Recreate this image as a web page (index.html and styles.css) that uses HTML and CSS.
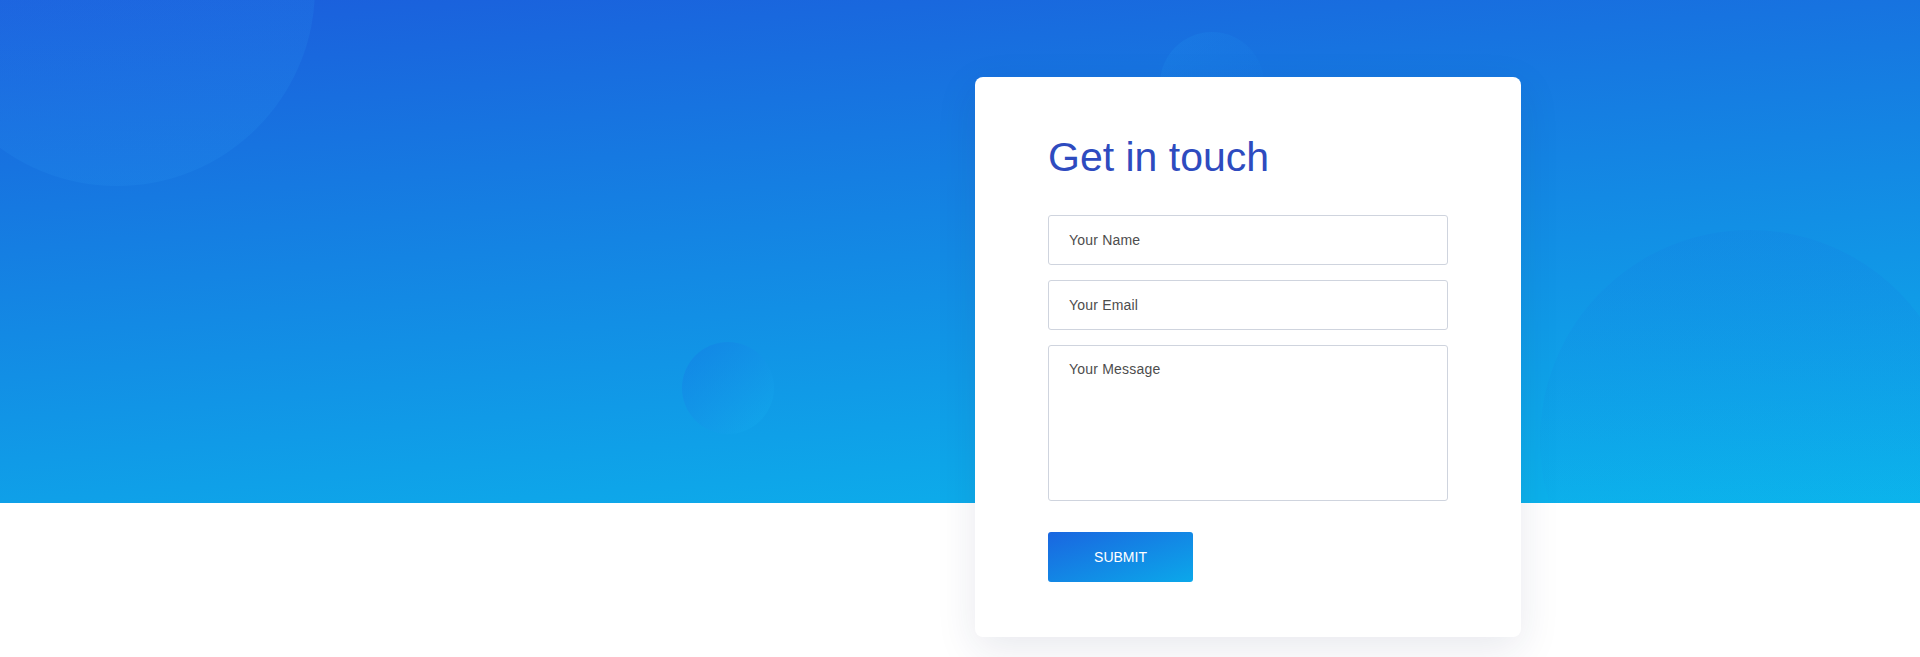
FILE: index.html
```html
<!DOCTYPE html>
<html lang="en">
<head>
<meta charset="utf-8">
<title>Get in touch</title>
<link rel="stylesheet" href="styles.css">
</head>
<body>
<section class="contact">
  <div class="band" aria-hidden="true">
    <span class="bubble bubble-big"></span>
    <span class="bubble bubble-small"></span>
    <span class="bubble bubble-top"></span>
    <span class="bubble bubble-right"></span>
  </div>
  <div class="layout">
    <div class="spacer"></div>
    <form class="card">
      <h2 class="title">Get in touch</h2>
      <div class="fields">
        <input class="field" type="text" placeholder="Your Name">
        <input class="field" type="email" placeholder="Your Email">
        <textarea class="field field-area" placeholder="Your Message"></textarea>
      </div>
      <button class="submit" type="button">SUBMIT</button>
    </form>
  </div>
</section>
</body>
</html>
```

FILE: styles.css
```css
* { box-sizing: border-box; }

html, body {
  margin: 0;
  padding: 0;
  background: #fff;
  font-family: "Liberation Sans", Arial, sans-serif;
}

.contact {
  position: relative;
  height: 657px;
  overflow: hidden;
}

.band {
  position: absolute;
  left: 0;
  top: 0;
  width: 100%;
  height: 503px;
  overflow: hidden;
  background: linear-gradient(175deg, #1b5ddc 0%, #0bb6ec 100%);
}

.bubble {
  position: absolute;
  border-radius: 50%;
}

.bubble-big {
  left: -81px;
  top: -210px;
  width: 396px;
  height: 396px;
  background: linear-gradient(160deg, rgba(40,130,240,0.16), rgba(40,150,240,0.2));
}

.bubble-small {
  left: 682px;
  top: 342px;
  width: 92px;
  height: 92px;
  background: linear-gradient(135deg, rgba(20,120,228,0.5), rgba(20,185,240,0.3));
}

.bubble-top {
  left: 1160px;
  top: 32px;
  width: 104px;
  height: 104px;
  background: linear-gradient(135deg, rgba(30,140,235,0.3), rgba(20,110,225,0.12));
}

.bubble-right {
  left: 1540px;
  top: 230px;
  width: 420px;
  height: 420px;
  background: linear-gradient(180deg, rgba(20,120,225,0.18), rgba(20,150,230,0.04) 70%);
}

.layout {
  position: relative;
  display: grid;
  grid-template-columns: 975px 546px 1fr;
  padding-top: 77px;
}

.card {
  grid-column: 2;
  background: #fff;
  border-radius: 8px;
  padding: 57px 73px 55px 73px;
  box-shadow: 0 12px 40px rgba(30, 40, 90, 0.10);
  display: flex;
  flex-direction: column;
  align-items: flex-start;
}

.title {
  margin: 0 0 35px 0;
  font-weight: 400;
  font-size: 41px;
  line-height: 46px;
  color: #2e4bbf;
  letter-spacing: 0;
}

.fields {
  display: flex;
  flex-direction: column;
  gap: 15px;
  width: 400px;
}

.field {
  display: block;
  width: 100%;
  height: 50px;
  margin: 0;
  padding: 0 20px;
  border: 1px solid #cfd4de;
  border-radius: 3px;
  background: #fff;
  font-family: "Liberation Sans", Arial, sans-serif;
  font-size: 14px;
  letter-spacing: 0.2px;
  color: #333;
  outline: none;
}

.field::placeholder {
  color: #4d4d4d;
  opacity: 1;
}

.field-area {
  height: 156px;
  padding: 13px 20px;
  line-height: 20px;
  resize: none;
}

.submit {
  margin-top: 31px;
  width: 145px;
  height: 50px;
  border: none;
  border-radius: 3px;
  background: linear-gradient(160deg, #1a66e0 0%, #0ba8ea 100%);
  color: #fff;
  font-family: "Liberation Sans", Arial, sans-serif;
  font-size: 14px;
  letter-spacing: 0;
  cursor: pointer;
}
```
